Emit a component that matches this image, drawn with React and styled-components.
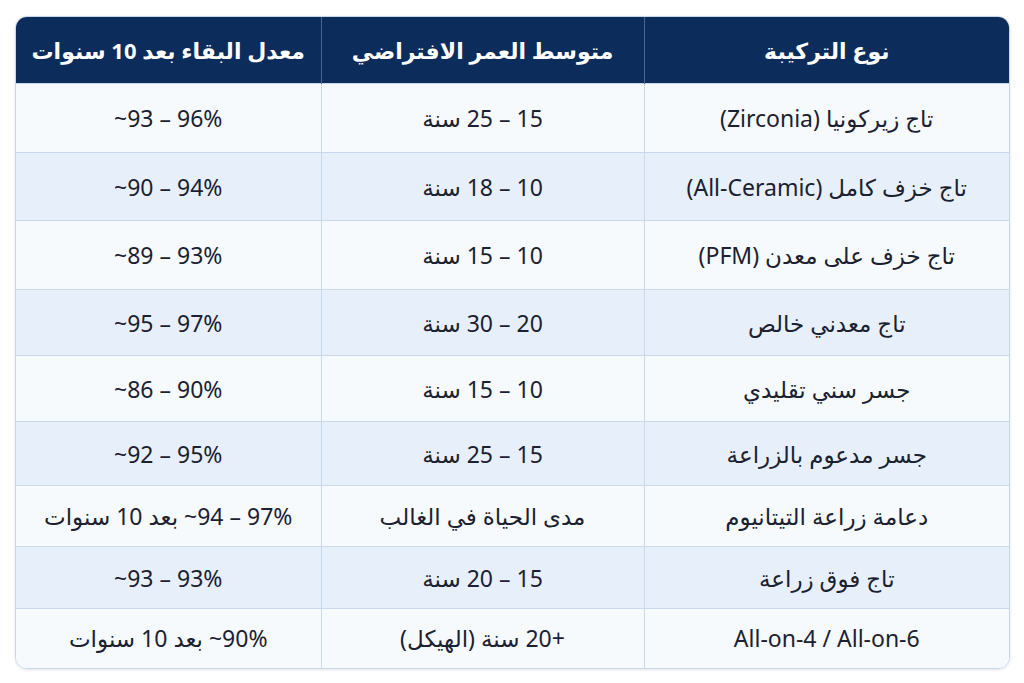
import React from "react";
import styled, { createGlobalStyle } from "styled-components";

const GlobalStyle = createGlobalStyle`
  html, body {
    margin: 0;
    padding: 0;
    background: #ffffff;
  }
  body {
    font-family: "Noto Sans", "DejaVu Sans", sans-serif;
  }
`;

const Page = styled.div`
  width: 1024px;
  height: 683px;
  padding: 16px 14px 0 15px;
  box-sizing: border-box;
  background: #ffffff;
`;

const Frame = styled.div`
  border: 1px solid #c9d6e6;
  border-radius: 12px;
  overflow: hidden;
  box-shadow: 0 1px 3px rgba(20, 45, 90, 0.12);
`;

const Table = styled.table`
  width: 100%;
  direction: rtl;
  border-collapse: collapse;
  table-layout: fixed;
  font-family: "Noto Sans", "DejaVu Sans", sans-serif;
`;

const HeadCell = styled.th`
  height: 66px;
  padding: 0 4px;
  background: #0c2c5c;
  color: #ffffff;
  font-size: 22px;
  font-weight: 700;
  text-align: center;
  white-space: nowrap;
  border-left: 1px solid #4a6690;
  &:last-child {
    border-left: none;
  }
`;

const Row = styled.tr`
  background: ${(p) => (p.$alt ? "#e7f0fa" : "#f7fafd")};
  height: ${(p) => p.$h}px;
`;

const Cell = styled.td`
  padding: 0 10px;
  text-align: center;
  color: #1b2130;
  font-size: 23px;
  font-weight: 400;
  white-space: nowrap;
  border-top: 1px solid #c9d8ea;
  border-left: 1px solid #c9d8ea;
  &:last-child {
    border-left: none;
  }
`;

const headers = ["نوع التركيبة", "متوسط العمر الافتراضي", "معدل البقاء بعد 10 سنوات"];

const rows = [
  { h: 69, cells: ["تاج زيركونيا (Zirconia)", "15 – 25 سنة", "96% – 93~"] },
  { h: 68, cells: ["تاج خزف كامل (All-Ceramic)", "10 – 18 سنة", "94% – 90~"] },
  { h: 69, cells: ["تاج خزف على معدن (PFM)", "10 – 15 سنة", "93% – 89~"] },
  { h: 66, cells: ["تاج معدني خالص", "20 – 30 سنة", "97% – 95~"] },
  { h: 66, cells: ["جسر سني تقليدي", "10 – 15 سنة", "90% – 86~"] },
  { h: 64, cells: ["جسر مدعوم بالزراعة", "15 – 25 سنة", "95% – 92~"] },
  { h: 61, cells: ["دعامة زراعة التيتانيوم", "مدى الحياة في الغالب", "97% – 94~ بعد 10 سنوات"] },
  { h: 62, cells: ["تاج فوق زراعة", "15 – 20 سنة", "93% – 93~"] },
  { h: 59, cells: ["All-on-4 / All-on-6", "+20 سنة (الهيكل)", "90%~ بعد 10 سنوات"] },
];

export default function App() {
  return (
    <>
      <GlobalStyle />
      <Page>
        <Frame>
          <Table>
            <colgroup>
              <col style={{ width: "365px" }} />
              <col style={{ width: "323px" }} />
              <col />
            </colgroup>
            <thead>
              <tr>
                {headers.map((h) => (
                  <HeadCell key={h}>{h}</HeadCell>
                ))}
              </tr>
            </thead>
            <tbody>
              {rows.map((r, i) => (
                <Row key={i} $alt={i % 2 === 1} $h={r.h}>
                  {r.cells.map((c, j) => (
                    <Cell key={j}>{c}</Cell>
                  ))}
                </Row>
              ))}
            </tbody>
          </Table>
        </Frame>
      </Page>
    </>
  );
}
